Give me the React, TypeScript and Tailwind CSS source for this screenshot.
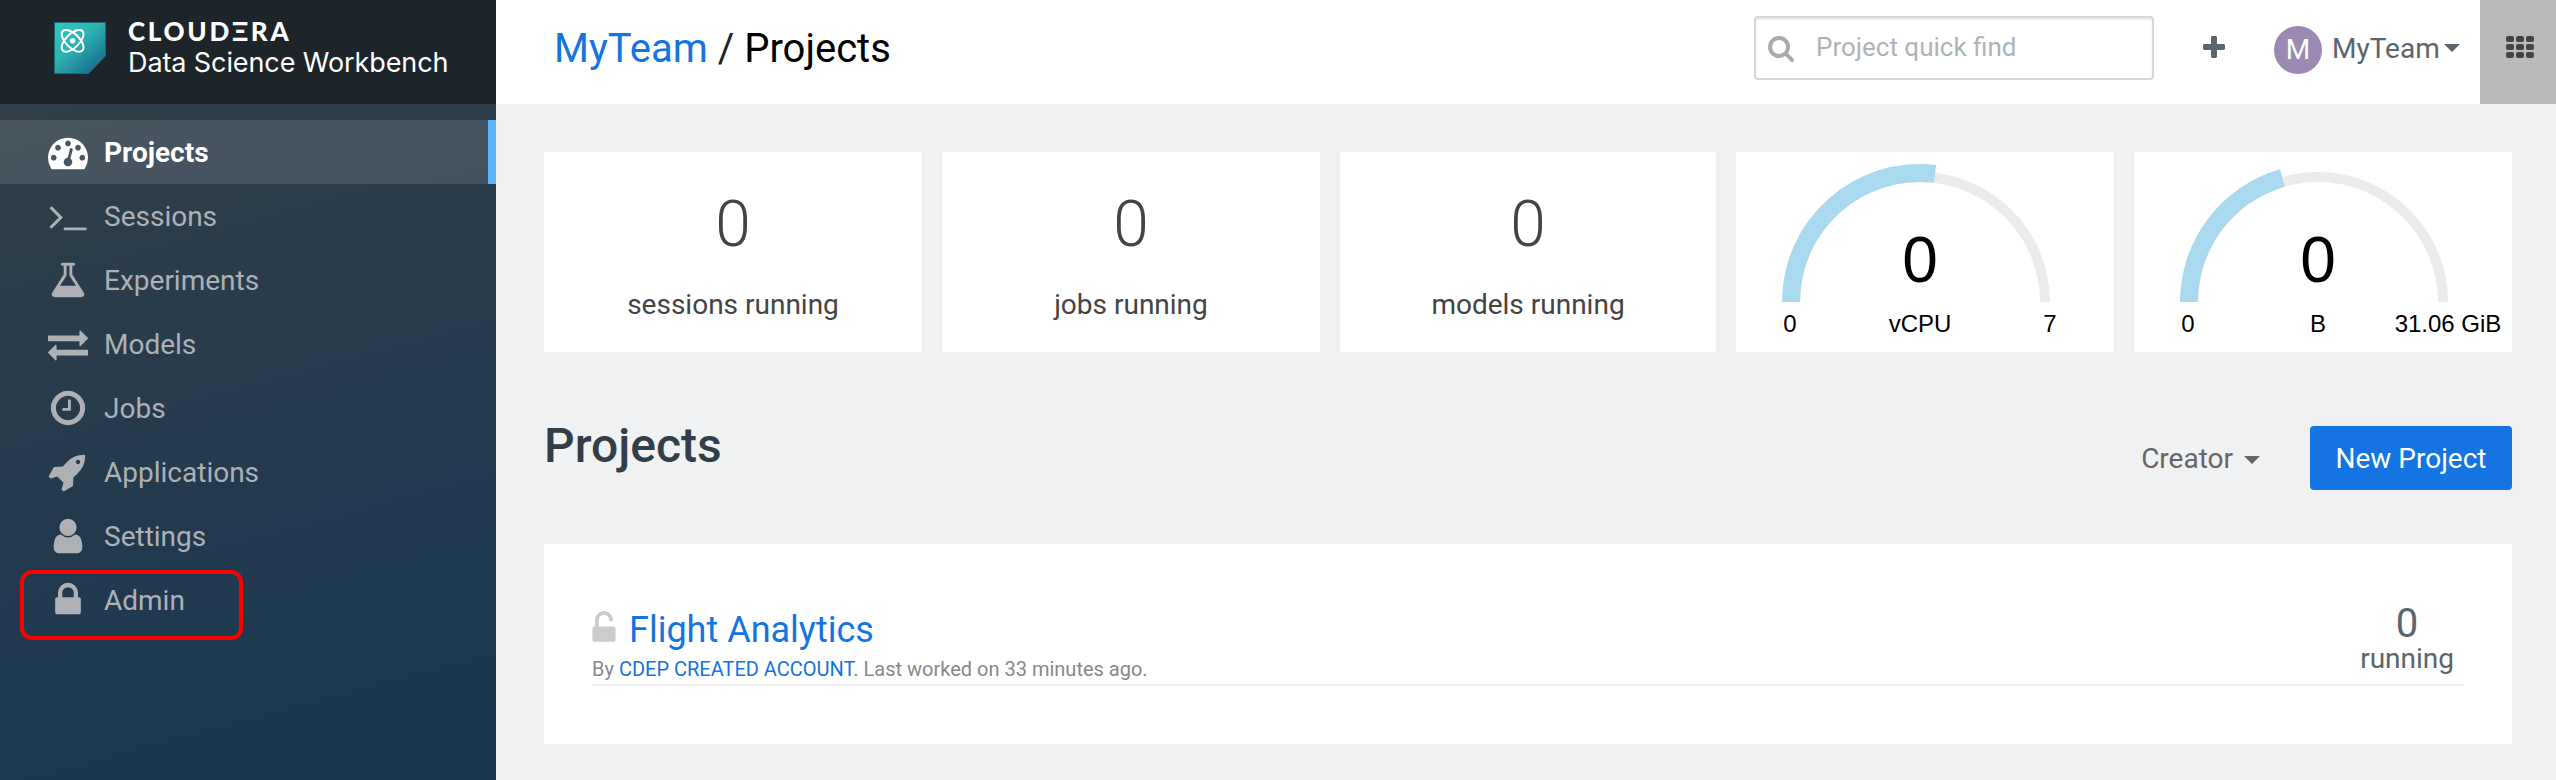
import React from "react";

const ICONS = {
  dashboard:
    "M384 1152q0-53-37.5-90.5t-90.5-37.5-90.5 37.5-37.5 90.5 37.5 90.5 90.5 37.5 90.5-37.5 37.5-90.5zm192-448q0-53-37.5-90.5t-90.5-37.5-90.5 37.5-37.5 90.5 37.5 90.5 90.5 37.5 90.5-37.5 37.5-90.5zm428 481l101-382q6-26-7.5-48.5t-38.5-29.5-48 6.5-30 39.5l-101 382q-60 5-107 43.5t-63 98.5q-20 77 20 146t117 89 146-20 89-117q16-60-6-117t-72-91zm660-33q0-53-37.5-90.5t-90.5-37.5-90.5 37.5-37.5 90.5 37.5 90.5 90.5 37.5 90.5-37.5 37.5-90.5zm-640-640q0-53-37.5-90.5t-90.5-37.5-90.5 37.5-37.5 90.5 37.5 90.5 90.5 37.5 90.5-37.5 37.5-90.5zm448 192q0-53-37.5-90.5t-90.5-37.5-90.5 37.5-37.5 90.5 37.5 90.5 90.5 37.5 90.5-37.5 37.5-90.5zm320 448q0 261-141 483-19 29-54 29h-1402q-35 0-54-29-141-221-141-483 0-182 71-348t191-286 286-191 348-71 348 71 286 191 191 286 71 348z",
  terminal:
    "M649 983l-466 466q-10 10-23 10t-23-10l-50-50q-10-10-10-23t10-23l393-393-393-393q-10-10-10-23t10-23l50-50q10-10 23-10t23 10l466 466q10 10 10 23t-10 23zm1079 457v64q0 14-9 23t-23 9h-960q-14 0-23-9t-9-23v-64q0-14 9-23t23-9h960q14 0 23 9t9 23z",
  flask:
    "M1591 1448q56 89 21.5 152.5t-140.5 63.5h-1152q-106 0-140.5-63.5t21.5-152.5l503-793v-399h-64q-26 0-45-19t-19-45 19-45 45-19h512q26 0 45 19t19 45-19 45-45 19h-64v399zm-779-725l-272 429h712l-272-429-20-31v-436h-128v436z",
  exchange:
    "M1792 1184v192q0 13-9.5 22.5t-22.5 9.5h-1376v192q0 13-9.5 22.5t-22.5 9.5q-12 0-24-10l-319-320q-9-9-9-22 0-14 9-23l320-320q9-9 23-9 13 0 22.5 9.5t9.5 22.5v192h1376q13 0 22.5 9.5t9.5 22.5zm0-544q0 14-9 23l-320 320q-9 9-23 9-13 0-22.5-9.5t-9.5-22.5v-192h-1376q-13 0-22.5-9.5t-9.5-22.5v-192q0-13 9.5-22.5t22.5-9.5h1376v-192q0-14 9-23t23-9q12 0 24 10l319 319q9 9 9 23z",
  clock:
    "M1024 544v448q0 14-9 23t-23 9h-320q-14 0-23-9t-9-23v-64q0-14 9-23t23-9h224v-352q0-14 9-23t23-9h64q14 0 23 9t9 23zm416 352q0-148-73-273t-198-198-273-73-273 73-198 198-73 273 73 273 198 198 273 73 273-73 198-198 73-273zm224 0q0 209-103 385.5t-279.5 279.5-385.5 103-385.5-103-279.5-279.5-103-385.5 103-385.5 279.5-279.5 385.5-103 385.5 103 279.5 279.5 103 385.5z",
  rocket:
    "M1440 448q0-40-28-68t-68-28-68 28-28 68 28 68 68 28 68-28 28-68zm224-288q0 249-75.5 430.5t-253.5 360.5q-81 80-195 176l-20 379q-2 16-16 26l-384 224q-7 4-16 4-12 0-23-9l-64-64q-13-14-8-32l85-276-281-281-276 85q-3 1-9 1-14 0-23-9l-64-64q-17-19-5-39l224-384q10-14 26-16l379-20q96-114 176-195 188-187 358-258t431-71q14 0 24 9.5t10 22.5z",
  user:
    "M1536 1399q0 109-62.5 187t-150.5 78h-854q-88 0-150.5-78t-62.5-187q0-85 8.5-160.5t31.5-152 58.5-131 94-89 134.5-34.5q131 128 313 128t313-128q76 0 134.5 34.5t94 89 58.5 131 31.5 152 8.5 160.5zm-256-887q0 159-112.5 271.5t-271.5 112.5-271.5-112.5-112.5-271.5 112.5-271.5 271.5-112.5 271.5 112.5 112.5 271.5z",
  lock:
    "M640 768h512v-192q0-106-75-181t-181-75-181 75-75 181v192zm832 96v576q0 40-28 68t-68 28h-960q-40 0-68-28t-28-68v-576q0-40 28-68t68-28h32v-192q0-184 132-316t316-132 316 132 132 316v192h32q40 0 68 28t28 68z",
  unlock:
    "M1376 768q40 0 68 28t28 68v576q0 40-28 68t-68 28h-960q-40 0-68-28t-28-68v-576q0-40 28-68t68-28h32v-320q0-185 131.5-316.5t316.5-131.5 316.5 131.5 131.5 316.5q0 26-19 45t-45 19h-64q-26 0-45-19t-19-45q0-106-75-181t-181-75-181 75-75 181v320h736z",
  plus:
    "M1600 736v192q0 40-28 68t-68 28h-416v416q0 40-28 68t-68 28h-192q-40 0-68-28t-28-68v-416h-416q-40 0-68-28t-28-68v-192q0-40 28-68t68-28h416v-416q0-40 28-68t68-28h192q40 0 68 28t28 68v416h416q40 0 68 28t28 68z",
  search:
    "M1216 832q0-185-131.5-316.5t-316.5-131.5-316.5 131.5-131.5 316.5 131.5 316.5 316.5 131.5 316.5-131.5 131.5-316.5zm512 832q0 52-38 90t-90 38q-54 0-90-38l-343-342q-179 124-399 124-143 0-273.5-55.5t-225-150-150-225-55.5-273.5 55.5-273.5 150-225 225-150 273.5-55.5 273.5 55.5 225 150 150 225 55.5 273.5q0 220-124 399l343 343q37 37 37 90z",
};

type IconName = keyof typeof ICONS;

function Icon({ name, className }: { name: IconName; className: string }) {
  return (
    <svg viewBox="0 0 1792 1792" fill="currentColor" className={className} aria-hidden="true">
      <path d={ICONS[name]} />
    </svg>
  );
}

function Caret({ className }: { className: string }) {
  return (
    <svg viewBox="0 0 16 8" fill="currentColor" className={className} aria-hidden="true">
      <path d="M0 0h16L8 8z" />
    </svg>
  );
}

function Logo() {
  return (
    <svg viewBox="0 0 52 52" className="h-[52px] w-[52px] shrink-0" aria-hidden="true">
      <defs>
        <linearGradient id="logo" x1="0.15" y1="0.15" x2="0.85" y2="0.95">
          <stop offset="0" stopColor="#31bfb9" />
          <stop offset="0.35" stopColor="#2eb3b3" />
          <stop offset="1" stopColor="#166a8c" />
        </linearGradient>
      </defs>
      <path d="M0.5 0.5h51v33.5L34.5 51.5H0.5z" fill="url(#logo)" stroke="#1c6a70" strokeWidth="1" />
      <g fill="none" stroke="#fff" strokeWidth="2">
        <ellipse cx="18.6" cy="18.8" rx="13.8" ry="6.8" transform="rotate(45 18.6 18.8)" />
        <ellipse cx="18.6" cy="18.8" rx="13.8" ry="6.8" transform="rotate(-45 18.6 18.8)" />
      </g>
      <circle cx="18.6" cy="18.8" r="2.7" fill="#fff" />
    </svg>
  );
}

const NAV: { label: string; icon: IconName; active?: boolean; marked?: boolean }[] = [
  { label: "Projects", icon: "dashboard", active: true },
  { label: "Sessions", icon: "terminal" },
  { label: "Experiments", icon: "flask" },
  { label: "Models", icon: "exchange" },
  { label: "Jobs", icon: "clock" },
  { label: "Applications", icon: "rocket" },
  { label: "Settings", icon: "user" },
  { label: "Admin", icon: "lock", marked: true },
];

function Sidebar() {
  return (
    <aside className="flex w-[496px] shrink-0 flex-col bg-linear-[165deg,#303f49_10%,#233a4e_60%,#1b3850_92%]">
      <div className="flex h-[104px] items-start bg-[#1d242a] pt-[22px] pl-[54px]">
        <Logo />
        <div className="ml-[22px] flex flex-col text-white">
          <span className="-mt-px font-['Lato'] text-[26px] leading-[20px] font-black tracking-[2.7px] whitespace-nowrap">
            CLOUDΞRA
          </span>
          <span className="mt-[4px] font-['Inter'] text-[27px] leading-[36px] tracking-[-0.1px] whitespace-nowrap">
            Data Science Workbench
          </span>
        </div>
      </div>
      <nav className="flex flex-col pt-4">
        {NAV.map((item) => (
          <a
            key={item.label}
            className={
              item.active
                ? "flex h-16 items-center border-r-8 border-[#5bb5fb] bg-white/12 bg-clip-padding pl-12 font-bold text-white"
                : "relative flex h-16 items-center pl-12 text-[#adb1b5]"
            }
          >
            <Icon name={item.icon} className="h-10 w-10 shrink-0" />
            <span className="ml-4 pt-[2px] text-[28px]">{item.label}</span>
            {item.marked && (
              <span className="absolute top-[2px] left-5 h-[70px] w-[223px] rounded-xl border-4 border-[#fe0000]" />
            )}
          </a>
        ))}
      </nav>
    </aside>
  );
}

function Header() {
  return (
    <header className="flex h-[104px] items-start bg-white pl-[58px]">
      <h1 className="pt-[25px] text-[40px] leading-[48px] whitespace-nowrap text-black">
        <a className="text-[#1474e1]">MyTeam</a> <span className="text-[#222]">/</span> Projects
      </h1>
      <div className="mt-4 ml-auto flex h-16 w-[400px] items-start rounded-[4px] border-2 border-[#d6d6de] pl-[11px] shadow-[inset_0_2px_2px_rgba(0,0,0,0.08)]">
        <Icon name="search" className="mt-4 h-7 w-7 text-[#aaa]" />
        <span className="mt-[13px] ml-[21px] text-[26px] leading-[32px] text-[#adb4b9]">Project quick find</span>
      </div>
      <Icon name="plus" className="mt-[34px] ml-[46px] h-7 w-7 text-[#5a656d]" />
      <span className="mt-[26px] ml-[46px] flex h-12 w-12 items-center justify-center rounded-full bg-[#9b89b3] text-[28px] text-white">
        M
      </span>
      <span className="mt-[33px] ml-[10px] w-[112px] text-[28px] leading-[32px] text-[#5a656d]">MyTeam</span>
      <Caret className="mt-[44px] h-2 w-4 text-[#5a656d]" />
      <div className="ml-5 flex h-[104px] w-[76px] bg-[#bababa] pt-9 pl-[26px]">
        <div className="grid h-[22px] w-7 grid-cols-3 gap-[2px]">
          {Array.from({ length: 9 }, (_, i) => (
            <span key={i} className="rounded-[2px] bg-[#444]" />
          ))}
        </div>
      </div>
    </header>
  );
}

function StatCard({ value, label }: { value: string; label: string }) {
  return (
    <div className="flex h-[200px] flex-col items-center bg-white text-[#444]">
      <span className="mt-[35px] text-[64px] leading-[75px] font-light">{value}</span>
      <span className="mt-[26px] text-[28px] leading-[33px]">{label}</span>
    </div>
  );
}

const CX = 184;
const CY = 150;

function arc(outer: number, inner: number, degrees: number) {
  const a = (degrees * Math.PI) / 180;
  const x = -Math.cos(a);
  const y = -Math.sin(a);
  return `M${CX - outer} ${CY}A${outer} ${outer} 0 0 1 ${CX + outer * x} ${CY + outer * y}L${CX + inner * x} ${
    CY + inner * y
  }A${inner} ${inner} 0 0 0 ${CX - inner} ${CY}Z`;
}

function GaugeCard({ unit, max, degrees }: { unit: string; max: string; degrees: number }) {
  return (
    <div className="h-[200px] overflow-hidden bg-white">
      <svg width="377" height="200" className="block font-['Liberation_Sans',Arial,sans-serif]" textAnchor="middle">
        <path d={arc(130, 120, 180)} fill="#edebeb" />
        <path d={arc(138, 120, degrees)} fill="#aadaf0" />
        <text x={CX} y="130" fontSize="64">
          0
        </text>
        <g fontSize="24">
          <text x={CX - 130} y="180">
            0
          </text>
          <text x={CX} y="180">
            {unit}
          </text>
          <text x={CX + 130} y="180">
            {max}
          </text>
        </g>
      </svg>
    </div>
  );
}

function ProjectList() {
  return (
    <section className="mt-[54px] h-[200px] bg-white px-12 pt-[60px]">
      <div className="flex h-[82px] items-start justify-between border-b-2 border-[#eee]">
        <div>
          <div className="flex items-start">
            <Icon name="unlock" className="mt-[7px] -ml-[6px] h-9 w-9 text-[#ccc]" />
            <a className="ml-[7px] pt-[5px] text-[36px] leading-[42px] text-[#1474e1]">Flight Analytics</a>
          </div>
          <p className="mt-[6px] text-[20px] leading-[24px] text-[#888]">
            By <a className="text-[#1474e1]">CDEP CREATED ACCOUNT</a>. Last worked on 33 minutes ago.
          </p>
        </div>
        <div className="mr-[10px] flex flex-col items-center text-[#5a656d]">
          <span className="block h-10 text-[40px] leading-[40px]">0</span>
          <span className="block text-[28px] leading-[29px]">running</span>
        </div>
      </div>
    </section>
  );
}

export default function App() {
  return (
    <div className="flex h-[780px] w-[2556px] overflow-hidden bg-[#f0f1f3] font-['Roboto',sans-serif]">
      <Sidebar />
      <div className="flex min-w-0 flex-1 flex-col">
        <Header />
        <main className="flex flex-col pt-12 pr-[44px] pl-12">
          <div className="grid grid-cols-[378px_378px_376px_378px_378px] gap-5">
            <StatCard value="0" label="sessions running" />
            <StatCard value="0" label="jobs running" />
            <StatCard value="0" label="models running" />
            <GaugeCard unit="vCPU" max="7" degrees={96.7} />
            <GaugeCard unit="B" max="31.06 GiB" degrees={74} />
          </div>
          <div className="mt-[64px] flex h-[74px] items-start">
            <h2 className="pt-[2px] text-[48px] leading-[56px] font-medium text-[#333f48]">Projects</h2>
            <div className="mt-[10px] ml-auto flex h-16 items-center text-[#666]">
              <span className="pt-[2px] text-[28px]">Creator</span>
              <Caret className="mt-[4px] ml-[11px] h-2 w-4" />
            </div>
            <button className="mt-[10px] ml-[50px] flex h-16 w-[202px] items-center justify-center rounded-[4px] bg-[#1474e1] pt-[2px] text-[28px] text-white">
              New Project
            </button>
          </div>
          <ProjectList />
        </main>
      </div>
    </div>
  );
}
